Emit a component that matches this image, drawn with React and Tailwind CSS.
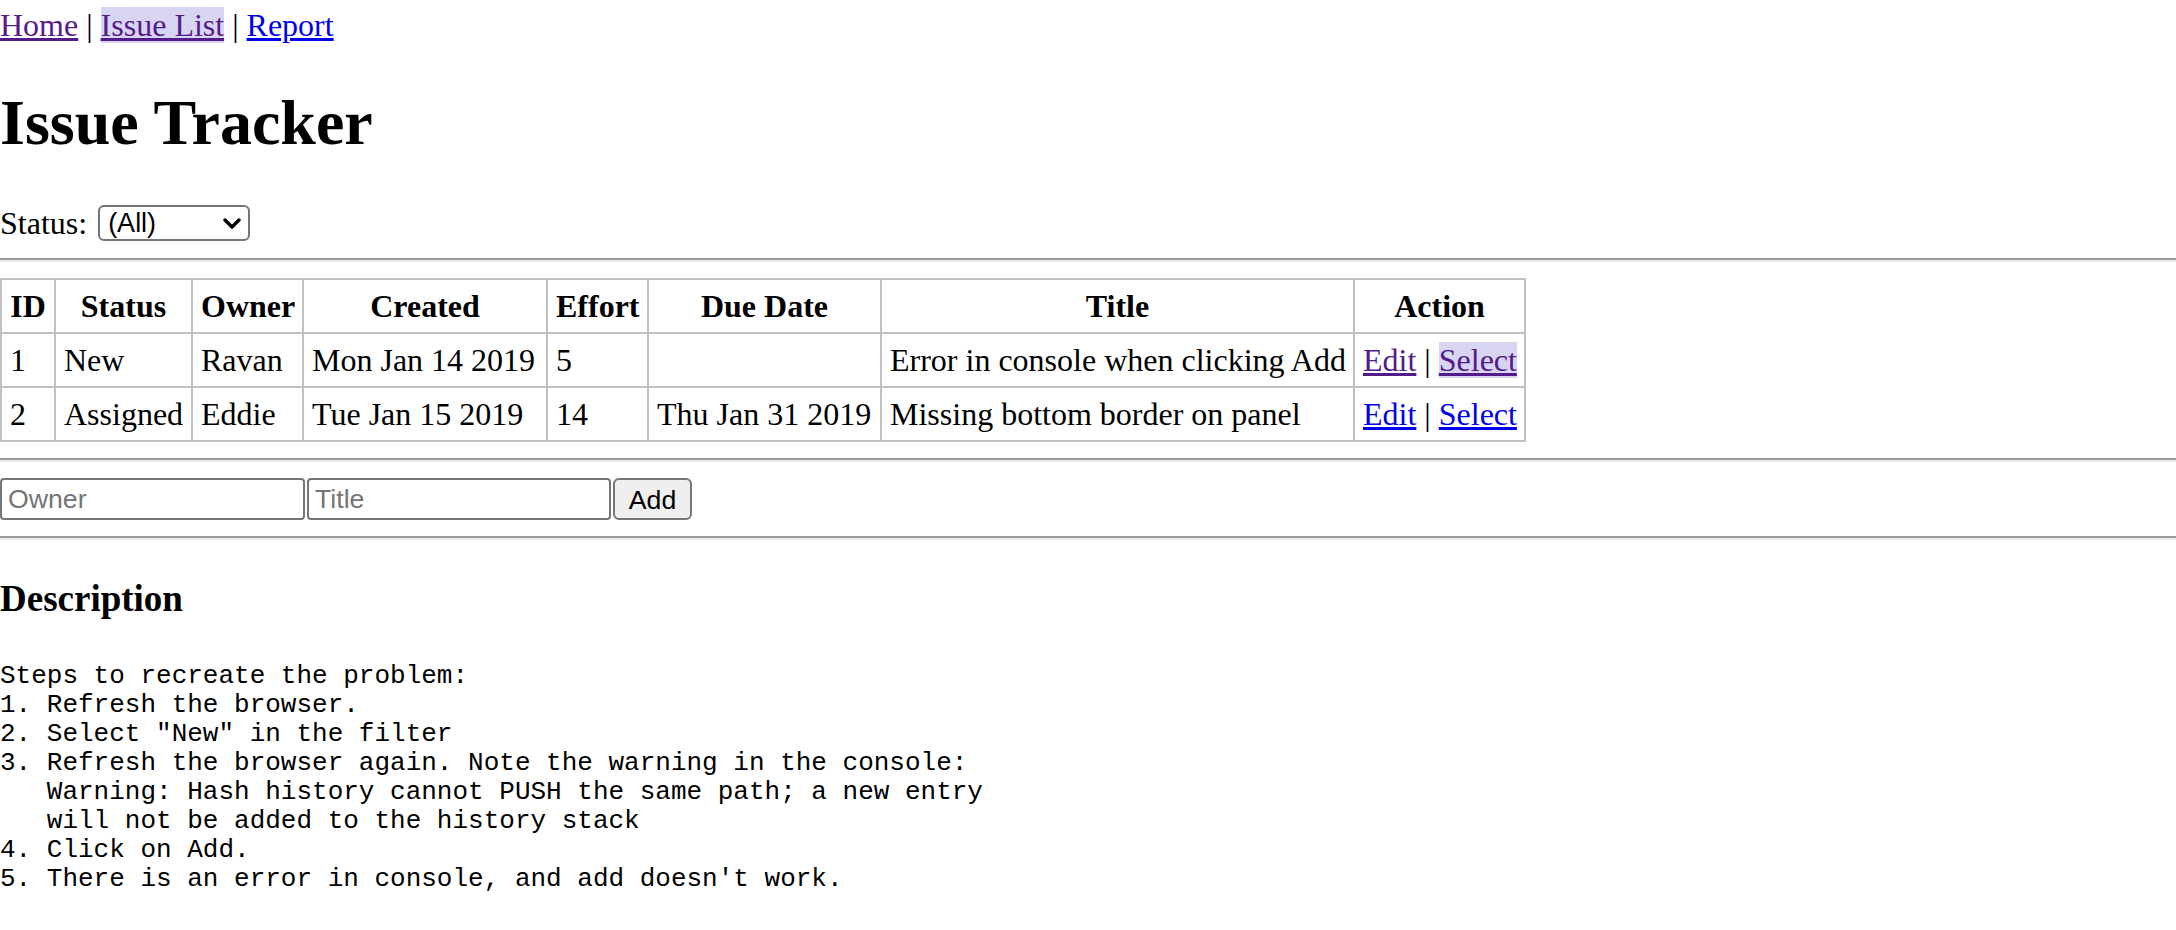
import React from 'react';

const issues = [
  {
    id: 1,
    status: 'New',
    owner: 'Ravan',
    created: 'Mon Jan 14 2019',
    effort: 5,
    due: '',
    title: 'Error in console when clicking Add',
    visited: true,
  },
  {
    id: 2,
    status: 'Assigned',
    owner: 'Eddie',
    created: 'Tue Jan 15 2019',
    effort: 14,
    due: 'Thu Jan 31 2019',
    title: 'Missing bottom border on panel',
    visited: false,
  },
];

const columns = [
  { label: 'ID', width: 'w-[54px]' },
  { label: 'Status', width: 'w-[137px]' },
  { label: 'Owner', width: 'w-[111px]' },
  { label: 'Created', width: 'w-[244px]' },
  { label: 'Effort', width: 'w-[101px]' },
  { label: 'Due Date', width: 'w-[233px]' },
  { label: 'Title', width: 'w-[473px]' },
  { label: 'Action', width: 'w-[171px]' },
];

const description = `Steps to recreate the problem:
1. Refresh the browser.
2. Select "New" in the filter
3. Refresh the browser again. Note the warning in the console:
   Warning: Hash history cannot PUSH the same path; a new entry
   will not be added to the history stack
4. Click on Add.
5. There is an error in console, and add doesn't work.`;

function Rule() {
  return <hr className="my-[16px] h-0 border-0 border-t-2 border-b-2 border-t-[#9a9a9a] border-b-[#ececec]" />;
}

const cell = 'border-2 border-[#c0c0c0] px-[8px] py-[8px] leading-[36px] whitespace-nowrap';

export default function App() {
  const visited = 'text-[#551a8b] underline';
  const fresh = 'text-[#0000ee] underline';

  return (
    <div className="min-h-[930px] bg-white text-black text-[32px] font-['Liberation_Serif',serif] pt-[7px]">
      {/* NAV */}
      <div className="leading-[36px]">
        <a href="#/" className={visited}>Home</a>
        {' | '}
        <a href="#/issues" className={`${visited} bg-[#d7d5f1]`}>Issue List</a>
        {' | '}
        <a href="#/report" className={fresh}>Report</a>
      </div>

      <h1 className="mt-[43px] mb-[43px] text-[64px] leading-[74px] font-bold">Issue Tracker</h1>

      {/* FILTER */}
      <div className="flex items-center h-[39px]">
        <span className="leading-[36px]">Status:</span>
        <div className="relative ml-[11px] w-[152px] h-[36px]">
          <select
            defaultValue=""
            className="block appearance-none w-full h-full bg-white border-2 border-[#767676] rounded-[6px] pl-[8px] pr-[30px] text-[27px] font-['Liberation_Sans',Arial,sans-serif] leading-[32px]"
          >
            <option value="">(All)</option>
            <option value="New">New</option>
            <option value="Assigned">Assigned</option>
            <option value="Fixed">Fixed</option>
            <option value="Closed">Closed</option>
          </select>
          <svg
            className="absolute right-[9px] top-[13px] pointer-events-none"
            width="18"
            height="11"
            viewBox="0 0 18 11"
          >
            <path d="M2 2 L9 9 L16 2" fill="none" stroke="#000" strokeWidth="3.4" strokeLinecap="round" strokeLinejoin="round" />
          </svg>
        </div>
      </div>

      <Rule />

      {/* TABLE */}
      <table className="table-fixed border-collapse w-[1524px]">
        <colgroup>
          {columns.map((c) => (
            <col key={c.label} className={c.width} />
          ))}
        </colgroup>
        <thead>
          <tr>
            {columns.map((c) => (
              <th key={c.label} className={`${cell} font-bold text-center`}>
                {c.label}
              </th>
            ))}
          </tr>
        </thead>
        <tbody>
          {issues.map((row) => (
            <tr key={row.id}>
              <td className={cell}>{row.id}</td>
              <td className={cell}>{row.status}</td>
              <td className={cell}>{row.owner}</td>
              <td className={cell}>{row.created}</td>
              <td className={cell}>{row.effort}</td>
              <td className={cell}>{row.due}</td>
              <td className={cell}>{row.title}</td>
              <td className={cell}>
                <a href={`#/edit/${row.id}`} className={row.visited ? visited : fresh}>Edit</a>
                {' | '}
                <a
                  href={`#/issues/${row.id}`}
                  className={row.visited ? `${visited} bg-[#d7d5f1]` : fresh}
                >
                  Select
                </a>
              </td>
            </tr>
          ))}
        </tbody>
      </table>

      <Rule />

      {/* ADD FORM */}
      <form className="flex h-[42px]" onSubmit={(e) => e.preventDefault()}>
        <input
          placeholder="Owner"
          className="w-[305px] h-full bg-white border-2 border-[#767676] rounded-[4px] px-[6px] text-[26.7px] font-['Liberation_Sans',Arial,sans-serif] placeholder:text-[#757575]"
        />
        <input
          placeholder="Title"
          className="ml-[2px] w-[304px] h-full bg-white border-2 border-[#767676] rounded-[4px] px-[6px] text-[26.7px] font-['Liberation_Sans',Arial,sans-serif] placeholder:text-[#757575]"
        />
        <button
          type="submit"
          className="ml-[2px] w-[79px] h-full bg-[#efefef] border-2 border-[#767676] rounded-[6px] text-[26.7px] font-['Liberation_Sans',Arial,sans-serif] text-black"
        >
          Add
        </button>
      </form>

      <Rule />

      {/* DESCRIPTION */}
      <h3 className="mt-[37px] mb-[42px] text-[37px] leading-[43px] font-bold">Description</h3>
      <pre className="m-0 text-[26px] leading-[29px] font-['Liberation_Mono','Courier_New',monospace] whitespace-pre">
        {description}
      </pre>
    </div>
  );
}
